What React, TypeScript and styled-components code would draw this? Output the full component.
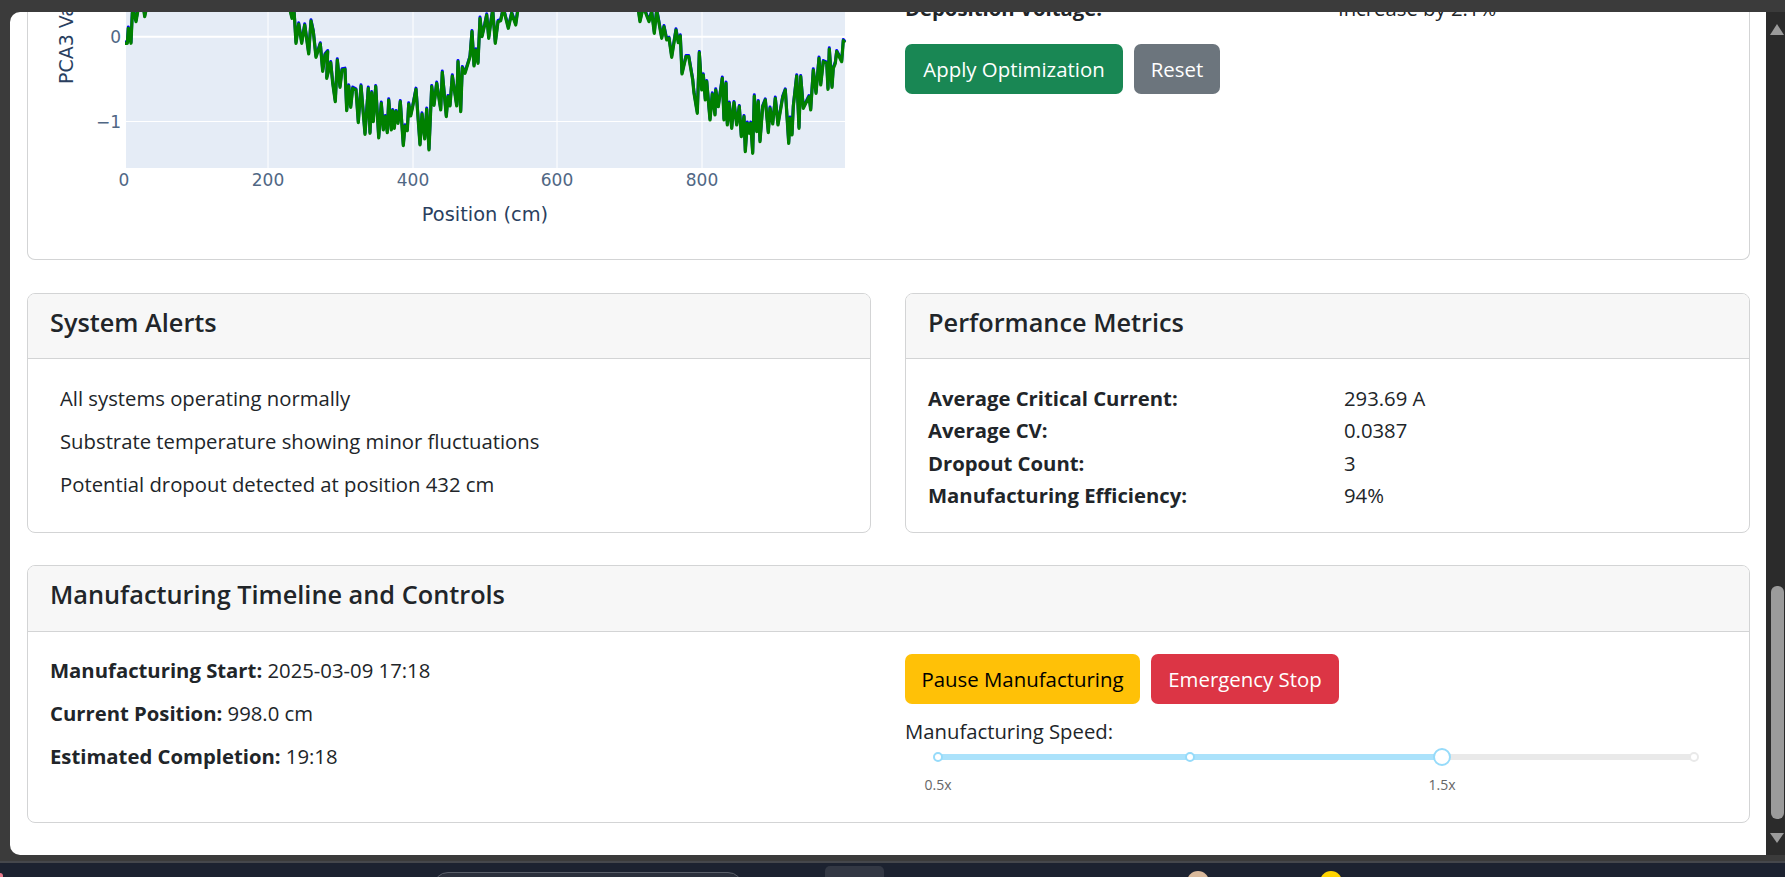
import styled, { createGlobalStyle } from "styled-components";

const GlobalStyle = createGlobalStyle`
  html, body { margin: 0; padding: 0; height: 100%; overflow: hidden; background: #3b3b3b; }
  body { font-family: "Open Sans", "Noto Sans", sans-serif; color: #212529; }
`;

const green1 = [[45,130],[52,130],[55,85],[63,130],[67,40],[70,30],[78,65],[85,25],[100,20],[104,50],[110,20],[490,20],[497,28],[525,28],[540,30],[546,55],[552,30],[558,130],[566,72],[575,130],[584,75],[596,162],[603,63],[610,95],[618,172],[631,132],[638,214],[645,165],[653,155],[650,235],[662,188],[668,250],[676,305],[682,180],[690,262],[696,210],[705,208],[710,332],[716,258],[722,322],[728,265],[738,270],[745,368],[753,258],[765,403],[775,265],[780,400],[785,278],[790,365],[797,260],[806,414],[814,310],[820,390],[826,350],[832,398],[836,300],[844,390],[848,332],[853,385],[858,335],[864,370],[871,305],[880,437],[885,378],[892,392],[896,312],[902,348],[908,320],[918,268],[930,435],[936,342],[944,417],[950,328],[957,450],[965,260],[972,316],[980,250],[992,330],[997,217],[1009,350],[1014,290],[1020,318],[1027,228],[1040,318],[1044,185],[1052,335],[1057,203],[1065,220],[1078,178]];
const green2 = [[0,170],[6,95],[12,198],[18,150],[24,190],[30,55],[36,110],[44,75],[50,45],[56,115],[62,70],[68,30],[76,130],[84,65],[92,62],[100,25],[115,85],[125,40],[137,75],[145,20],[500,20],[505,30],[510,65],[520,20],[537,65],[545,35],[553,100],[560,30],[575,115],[582,80],[590,120],[597,115],[605,172],[618,90],[625,128],[631,108],[636,222],[648,170],[656,170],[668,240],[672,280],[682,340],[688,158],[695,270],[700,225],[706,300],[710,245],[720,360],[727,282],[735,345],[737,270],[745,320],[757,235],[762,360],[768,250],[772,375],[778,310],[785,385],[792,308],[800,375],[808,320],[814,410],[822,350],[826,455],[832,370],[838,400],[842,370],[848,460],[853,288],[860,395],[865,305],[870,425],[878,320],[886,300],[895,398],[900,325],[908,372],[916,295],[924,375],[938,292],[946,270],[956,430],[960,355],[966,405],[970,320],[980,228],[987,385],[992,230],[1000,325],[1017,290],[1022,330],[1030,210],[1038,280],[1047,175],[1052,255],[1060,185],[1070,190],[1074,268],[1078,147],[1086,262],[1090,205],[1096,190],[1100,155],[1115,185],[1120,122],[1125,128]];

// traced from the crops, converted to page pixels
const tracePoints = (dy: number) =>
  [
    ...green1.map(([x, y]) => [110 + x / 3, y / 3 + dy]),
    ...green2.map(([x, y]) => [470 + x / 3, y / 3 + dy]),
  ]
    .map(([x, y]) => `${x.toFixed(1)},${y.toFixed(1)}`)
    .join(" ");

const Screen = styled.div`
  display: flex;
  flex-direction: column;
  height: 877px;
  background: #3b3b3b;
  overflow: hidden;
`;

const TopEdge = styled.div`
  height: 12px;
  flex: none;
`;

const Middle = styled.div`
  display: flex;
  height: 843px;
  flex: none;
  padding-left: 10px;
`;

const Panel = styled.div`
  flex: 1;
  background: #fff;
  border-radius: 10px 0 0 10px;
  padding: 0 16px 0 17px;
  overflow: hidden;
  display: flex;
  flex-direction: column;
  gap: 33px;
`;

const Scrollbar = styled.div`
  width: 19px;
  flex: none;
  background: #2b2b2b;
  display: flex;
  flex-direction: column;
  align-items: center;
  padding: 12px 0;
  box-sizing: border-box;
`;

const ArrowUp = styled.div`
  width: 0;
  height: 0;
  border-left: 7px solid transparent;
  border-right: 7px solid transparent;
  border-bottom: 11px solid #9b9b9b;
  margin-left: 3px;
`;

const ArrowDown = styled(ArrowUp)`
  border-bottom: none;
  border-top: 10px solid #9b9b9b;
  margin-top: 14px;
`;

const Thumb = styled.div`
  width: 13px;
  height: 233px;
  margin: 551px 0 0 3px;
  background: #9b9b9b;
  border-radius: 6px;
`;

const Taskbar = styled.div`
  margin-top: 6px;
  height: 16px;
  flex: none;
  background: #1c2230;
  border-top: 2px solid #45474c;
  box-sizing: border-box;
  position: relative;
  display: flex;
  align-items: flex-start;
  overflow: hidden;
`;

const CornerBadge = styled.div`
  position: absolute;
  left: -3px;
  top: 10px;
  width: 6px;
  height: 6px;
  border-radius: 50%;
  background: #e8788a;
`;

const SearchPill = styled.div`
  width: 310px;
  height: 30px;
  margin: 9px 0 0 433px;
  border-radius: 15px;
  background: #2b303c;
  border: 1px solid #5a5f69;
  box-sizing: border-box;
`;

const TaskButton = styled.div`
  width: 59px;
  height: 30px;
  margin: 3px 0 0 82px;
  border-radius: 5px;
  background: #333844;
`;

const TrayDot = styled.div<{ $color: string; $gap: number }>`
  width: 22px;
  height: 22px;
  margin: 8px 0 0 ${(p) => p.$gap}px;
  border-radius: 50%;
  background: ${(p) => p.$color};
`;

const Card = styled.div`
  border: 1px solid #d3d4d5;
  border-radius: 8px;
  background: #fff;
`;

const ChartCard = styled(Card)`
  border-top: none;
  border-radius: 0 0 8px 8px;
  height: 248px;
  box-sizing: border-box;
  display: grid;
  grid-template-columns: 844px 1fr;
  flex: none;
`;

const ChartSvg = styled.svg`
  display: block;
  width: 844px;
  height: 246px;
`;

const OptimizeColumn = styled.div`
  padding-left: 33px;
  overflow: hidden;
  height: 246px;
`;

const ClippedRow = styled.div`
  display: grid;
  grid-template-columns: 433px 1fr;
  font-size: 20.3px;
  line-height: 31px;
  margin-top: -19px;
  height: 51px;
`;

const ButtonRow = styled.div`
  display: flex;
  gap: 11px;
`;

const Button = styled.button<{ $bg: string; $fg?: string; $w: number }>`
  width: ${(p) => p.$w}px;
  height: 50px;
  padding: 0;
  border: none;
  border-radius: 7px;
  background: ${(p) => p.$bg};
  color: ${(p) => p.$fg ?? "#fff"};
  font: inherit;
  font-size: 20.4px;
`;

const TwoUp = styled.div`
  display: grid;
  grid-template-columns: 844px 1fr;
  gap: 34px;
  margin-bottom: -1px;
`;

const FixedCard = styled(Card)<{ $h: number }>`
  height: ${(p) => p.$h}px;
  box-sizing: border-box;
  display: flex;
  flex-direction: column;
`;

const CardHeader = styled.div`
  height: 65px;
  flex: none;
  box-sizing: border-box;
  background: #f7f7f7;
  border-bottom: 1px solid #d3d4d5;
  border-radius: 7px 7px 0 0;
  padding: 0 22px 9px;
  display: flex;
  align-items: center;
  font-size: 25.3px;
  font-weight: 600;
`;

const TimelineHeader = styled(CardHeader)`
  height: 66px;
`;

const AlertBody = styled.div`
  padding: 24px 32px;
  font-size: 20.3px;
  display: flex;
  flex-direction: column;
  gap: 13px;
  line-height: 30px;
`;

const MetricsBody = styled.div`
  padding: 23px 22px;
  font-size: 20.3px;
  display: grid;
  grid-template-columns: 416px 1fr;
  line-height: 32.4px;
`;

const Label = styled.span`
  font-weight: 700;
`;

const TimelineBody = styled.div`
  display: grid;
  grid-template-columns: 855px 1fr;
  padding: 22px 22px 0;
  font-size: 20.3px;
`;

const TimelineFacts = styled.div`
  display: flex;
  flex-direction: column;
  gap: 12px;
  line-height: 31px;
  padding-top: 1px;
`;

const Fact = styled.div``;

const SpeedLabel = styled.div`
  margin-top: 12px;
  line-height: 31px;
`;

const SliderBox = styled.div`
  position: relative;
  height: 60px;
`;

const Rail = styled.div`
  position: absolute;
  left: 33px;
  width: 756px;
  top: 7px;
  height: 6px;
  background: #e9e9e9;
  border-radius: 3px;
`;

const RailFill = styled.div`
  position: absolute;
  left: 33px;
  width: 504px;
  top: 7px;
  height: 6px;
  background: #abe2fb;
`;

const Dot = styled.div<{ $x: number; $size: number; $on?: boolean }>`
  position: absolute;
  left: ${(p) => p.$x}px;
  top: 10px;
  width: ${(p) => p.$size}px;
  height: ${(p) => p.$size}px;
  transform: translate(-50%, -50%);
  box-sizing: border-box;
  border-radius: 50%;
  background: #fff;
  border: 2px solid ${(p) => (p.$on ? "#96dbfa" : "#e9e9e9")};
`;

const Mark = styled.span<{ $x: number }>`
  position: absolute;
  left: ${(p) => p.$x}px;
  top: 28px;
  transform: translateX(-50%);
  font-size: 14px;
  color: #666;
`;

export default function App() {
  return (
    <>
      <GlobalStyle />
      <Screen>
        <TopEdge />
        <Middle>
          <Panel>
            <ChartCard>
              <ChartSvg viewBox="28 12 844 246">
                <rect x="126" y="12" width="719" height="156" fill="#e5ecf6" />
                {[268, 413, 557, 702].map((x) => (
                  <line key={x} x1={x} x2={x} y1="12" y2="168" stroke="#fff" strokeWidth="1" />
                ))}
                <line x1="126" x2="845" y1="36.7" y2="36.7" stroke="#fff" strokeWidth="2" />
                <line x1="126" x2="845" y1="121.5" y2="121.5" stroke="#fff" strokeWidth="1" />
                <polyline points={tracePoints(-1.2)} fill="none" stroke="#0000ff" strokeWidth="3" strokeLinejoin="round" />
                <polyline points={tracePoints(0)} fill="none" stroke="#008000" strokeWidth="3.2" strokeLinejoin="round" />
                <g fontFamily="DejaVu Sans, sans-serif" fontSize="17" fill="#2a3f5f">
                  {[["0", 124], ["200", 268], ["400", 413], ["600", 557], ["800", 702]].map(([t, x]) => (
                    <text key={t} x={x} y="186" textAnchor="middle" fill="#506784">{t}</text>
                  ))}
                  <text x="121" y="43" textAnchor="end" fill="#506784">0</text>
                  <text x="121" y="128" textAnchor="end" fill="#506784">−1</text>
                  <text x="485" y="221" textAnchor="middle" fontSize="19.4">Position (cm)</text>
                  <text transform="translate(73 84) rotate(-90)" fontSize="19">PCA3 Value</text>
                </g>
              </ChartSvg>
              <OptimizeColumn>
                <ClippedRow>
                  <Label>Deposition Voltage:</Label>
                  <span>Increase by 2.1%</span>
                </ClippedRow>
                <ButtonRow>
                  <Button $bg="#198754" $w={218}>Apply Optimization</Button>
                  <Button $bg="#6c757d" $w={86}>Reset</Button>
                </ButtonRow>
              </OptimizeColumn>
            </ChartCard>
            <TwoUp>
              <FixedCard $h={240}>
                <CardHeader>System Alerts</CardHeader>
                <AlertBody>
                  <div>All systems operating normally</div>
                  <div>Substrate temperature showing minor fluctuations</div>
                  <div>Potential dropout detected at position 432 cm</div>
                </AlertBody>
              </FixedCard>
              <FixedCard $h={240}>
                <CardHeader>Performance Metrics</CardHeader>
                <MetricsBody>
                  <Label>Average Critical Current:</Label><span>293.69 A</span>
                  <Label>Average CV:</Label><span>0.0387</span>
                  <Label>Dropout Count:</Label><span>3</span>
                  <Label>Manufacturing Efficiency:</Label><span>94%</span>
                </MetricsBody>
              </FixedCard>
            </TwoUp>
            <FixedCard $h={258}>
              <TimelineHeader>Manufacturing Timeline and Controls</TimelineHeader>
              <TimelineBody>
                <TimelineFacts>
                  <Fact><Label>Manufacturing Start:</Label> 2025-03-09 17:18</Fact>
                  <Fact><Label>Current Position:</Label> 998.0 cm</Fact>
                  <Fact><Label>Estimated Completion:</Label> 19:18</Fact>
                </TimelineFacts>
                <div>
                  <ButtonRow>
                    <Button $bg="#ffc107" $fg="#000" $w={235}>Pause Manufacturing</Button>
                    <Button $bg="#dc3545" $w={188}>Emergency Stop</Button>
                  </ButtonRow>
                  <SpeedLabel>Manufacturing Speed:</SpeedLabel>
                  <SliderBox>
                    <Rail />
                    <RailFill />
                    <Dot $x={33} $size={10} $on />
                    <Dot $x={285} $size={10} $on />
                    <Dot $x={537} $size={18} $on />
                    <Dot $x={789} $size={10} />
                    <Mark $x={33}>0.5x</Mark>
                    <Mark $x={537}>1.5x</Mark>
                  </SliderBox>
                </div>
              </TimelineBody>
            </FixedCard>
          </Panel>
          <Scrollbar>
            <ArrowUp />
            <Thumb />
            <ArrowDown />
          </Scrollbar>
        </Middle>
        <Taskbar>
          <CornerBadge />
          <SearchPill />
          <TaskButton />
          <TrayDot $color="#d9b99b" $gap={303} />
          <TrayDot $color="#ffd400" $gap={111} />
        </Taskbar>
      </Screen>
    </>
  );
}
